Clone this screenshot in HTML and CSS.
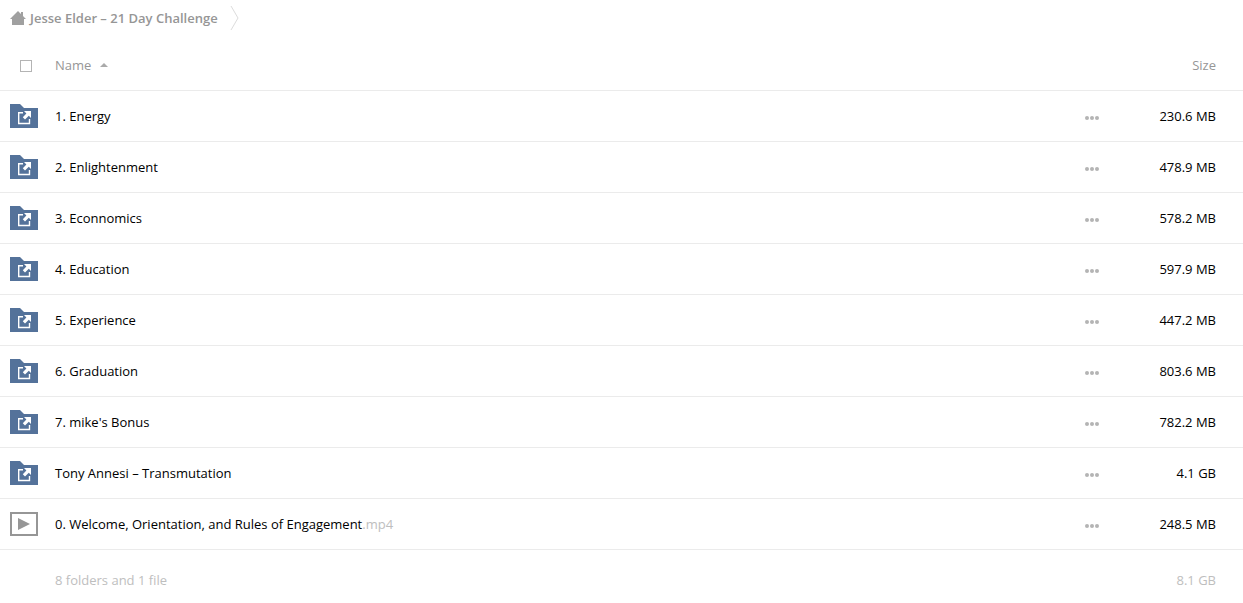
FILE: index.html
```html
<!DOCTYPE html>
<html lang="en">
<head>
  <meta charset="UTF-8">
  <meta name="viewport" content="width=device-width, initial-scale=1.0">
  <title>Jesse Elder – 21 Day Challenge</title>
  <link rel="stylesheet" href="styles.css">
</head>
<body>
  <svg class="sprite" aria-hidden="true">
    <symbol id="folder" viewBox="0 0 28 24">
      <path fill="#54729a" d="M0 0h10l4 4h14v20H0z"/>
      <path fill="none" stroke="#fff" stroke-width="1.4" d="M13 8.7H8.7v10.8h10.8V15"/>
      <path fill="#fff" d="M14 7h7v7l-2.2-2.2-3.8 3.7-2.2-2.2 3.6-3.8z"/>
    </symbol>
    <symbol id="video" viewBox="0 0 28 24">
      <rect x="1" y="1" width="26" height="22" fill="#fff" stroke="#969696" stroke-width="2"/>
      <path fill="#969696" d="M8 6l12 6-12 6z"/>
    </symbol>
    <symbol id="dots" viewBox="0 0 14 4">
      <g fill="#b4b4b4"><circle cx="2" cy="2" r="2"/><circle cx="7" cy="2" r="2"/><circle cx="12" cy="2" r="2"/></g>
    </symbol>
  </svg>

  <nav class="breadcrumbs">
    <a href="#">
      <svg width="16" height="14" viewBox="0 0 16 14"><path fill="#a0a0a0" d="M8 0l3 3V1h2v4l3 3h-2v6H2V8H0z"/></svg>
      Jesse Elder – 21 Day Challenge
    </a>
    <svg class="separator" width="10" height="26" viewBox="0 0 10 26"><path fill="none" stroke="#dcdcdc" d="M1 1l7 12-7 12"/></svg>
  </nav>

  <table class="files">
    <thead>
      <tr>
        <th class="icon"><input type="checkbox" aria-label="Select all"></th>
        <th class="name"><a href="#">Name <svg width="8" height="4" viewBox="0 0 8 4"><path fill="#aaa" d="M4 0l4 4H0z"/></svg></a></th>
        <th class="menu"></th>
        <th class="size"><a href="#">Size</a></th>
      </tr>
    </thead>
    <tbody>
      <tr>
        <td class="icon"><svg><use href="#folder"/></svg></td>
        <td class="name"><a href="#">1. Energy</a></td>
        <td class="menu"><button aria-label="More"><svg><use href="#dots"/></svg></button></td>
        <td class="size">230.6 MB</td>
      </tr>
      <tr>
        <td class="icon"><svg><use href="#folder"/></svg></td>
        <td class="name"><a href="#">2. Enlightenment</a></td>
        <td class="menu"><button aria-label="More"><svg><use href="#dots"/></svg></button></td>
        <td class="size">478.9 MB</td>
      </tr>
      <tr>
        <td class="icon"><svg><use href="#folder"/></svg></td>
        <td class="name"><a href="#">3. Econnomics</a></td>
        <td class="menu"><button aria-label="More"><svg><use href="#dots"/></svg></button></td>
        <td class="size">578.2 MB</td>
      </tr>
      <tr>
        <td class="icon"><svg><use href="#folder"/></svg></td>
        <td class="name"><a href="#">4. Education</a></td>
        <td class="menu"><button aria-label="More"><svg><use href="#dots"/></svg></button></td>
        <td class="size">597.9 MB</td>
      </tr>
      <tr>
        <td class="icon"><svg><use href="#folder"/></svg></td>
        <td class="name"><a href="#">5. Experience</a></td>
        <td class="menu"><button aria-label="More"><svg><use href="#dots"/></svg></button></td>
        <td class="size">447.2 MB</td>
      </tr>
      <tr>
        <td class="icon"><svg><use href="#folder"/></svg></td>
        <td class="name"><a href="#">6. Graduation</a></td>
        <td class="menu"><button aria-label="More"><svg><use href="#dots"/></svg></button></td>
        <td class="size">803.6 MB</td>
      </tr>
      <tr>
        <td class="icon"><svg><use href="#folder"/></svg></td>
        <td class="name"><a href="#">7. mike's Bonus</a></td>
        <td class="menu"><button aria-label="More"><svg><use href="#dots"/></svg></button></td>
        <td class="size">782.2 MB</td>
      </tr>
      <tr>
        <td class="icon"><svg><use href="#folder"/></svg></td>
        <td class="name"><a href="#">Tony Annesi – Transmutation</a></td>
        <td class="menu"><button aria-label="More"><svg><use href="#dots"/></svg></button></td>
        <td class="size">4.1 GB</td>
      </tr>
      <tr>
        <td class="icon"><svg><use href="#video"/></svg></td>
        <td class="name"><a href="#">0. Welcome, Orientation, and Rules of Engagement<span class="ext">.mp4</span></a></td>
        <td class="menu"><button aria-label="More"><svg><use href="#dots"/></svg></button></td>
        <td class="size">248.5 MB</td>
      </tr>
    </tbody>
    <tfoot>
      <tr>
        <td class="icon"></td>
        <td class="name">8 folders and 1 file</td>
        <td class="menu"></td>
        <td class="size">8.1 GB</td>
      </tr>
    </tfoot>
  </table>
</body>
</html>
```

FILE: styles.css
```css
body {
  margin: 0;
  background: #fff;
  color: #000;
  font-family: "Open Sans", "Liberation Sans", sans-serif;
  font-size: 13px;
  line-height: 18px;
}

a {
  color: inherit;
  text-decoration: none;
}

svg {
  display: block;
}

.sprite {
  position: absolute;
  width: 0;
  height: 0;
}

/* breadcrumbs */
.breadcrumbs {
  display: flex;
  align-items: center;
  gap: 12px;
  height: 36px;
  padding: 0 10px;
  margin-bottom: 4px;
  color: #969696;
  font-weight: 600;
}

.breadcrumbs a {
  display: flex;
  align-items: center;
  gap: 4px;
}

/* file list */
.files {
  width: 100%;
  border-collapse: separate;
  border-spacing: 0;
}

.files th,
.files td {
  height: 50px;
  padding: 0;
  border-bottom: 1px solid #ebebeb;
  text-align: left;
  font-weight: 400;
}

.files th {
  color: #969696;
}

.files .icon {
  width: 45px;
  padding-left: 10px;
}

.icon svg {
  width: 28px;
  height: 24px;
}

.icon input {
  display: block;
  appearance: none;
  width: 12px;
  height: 12px;
  margin: 2px 10px 0;
  border: 1px solid #b4b4b4;
  background: #fff;
}

th a {
  display: inline-flex;
  align-items: center;
  gap: 9px;
}

.ext {
  color: #bebebe;
}

.files .menu {
  width: 30px;
}

.menu button {
  display: block;
  padding: 10px 8px 6px;
  border: 0;
  background: none;
  cursor: pointer;
}

.menu svg {
  width: 14px;
  height: 4px;
}

.files .size {
  width: 109px;
  padding-right: 27px;
  text-align: right;
}

.files tfoot td {
  height: 60px;
  border-bottom: 0;
  color: #bebebe;
}
```
